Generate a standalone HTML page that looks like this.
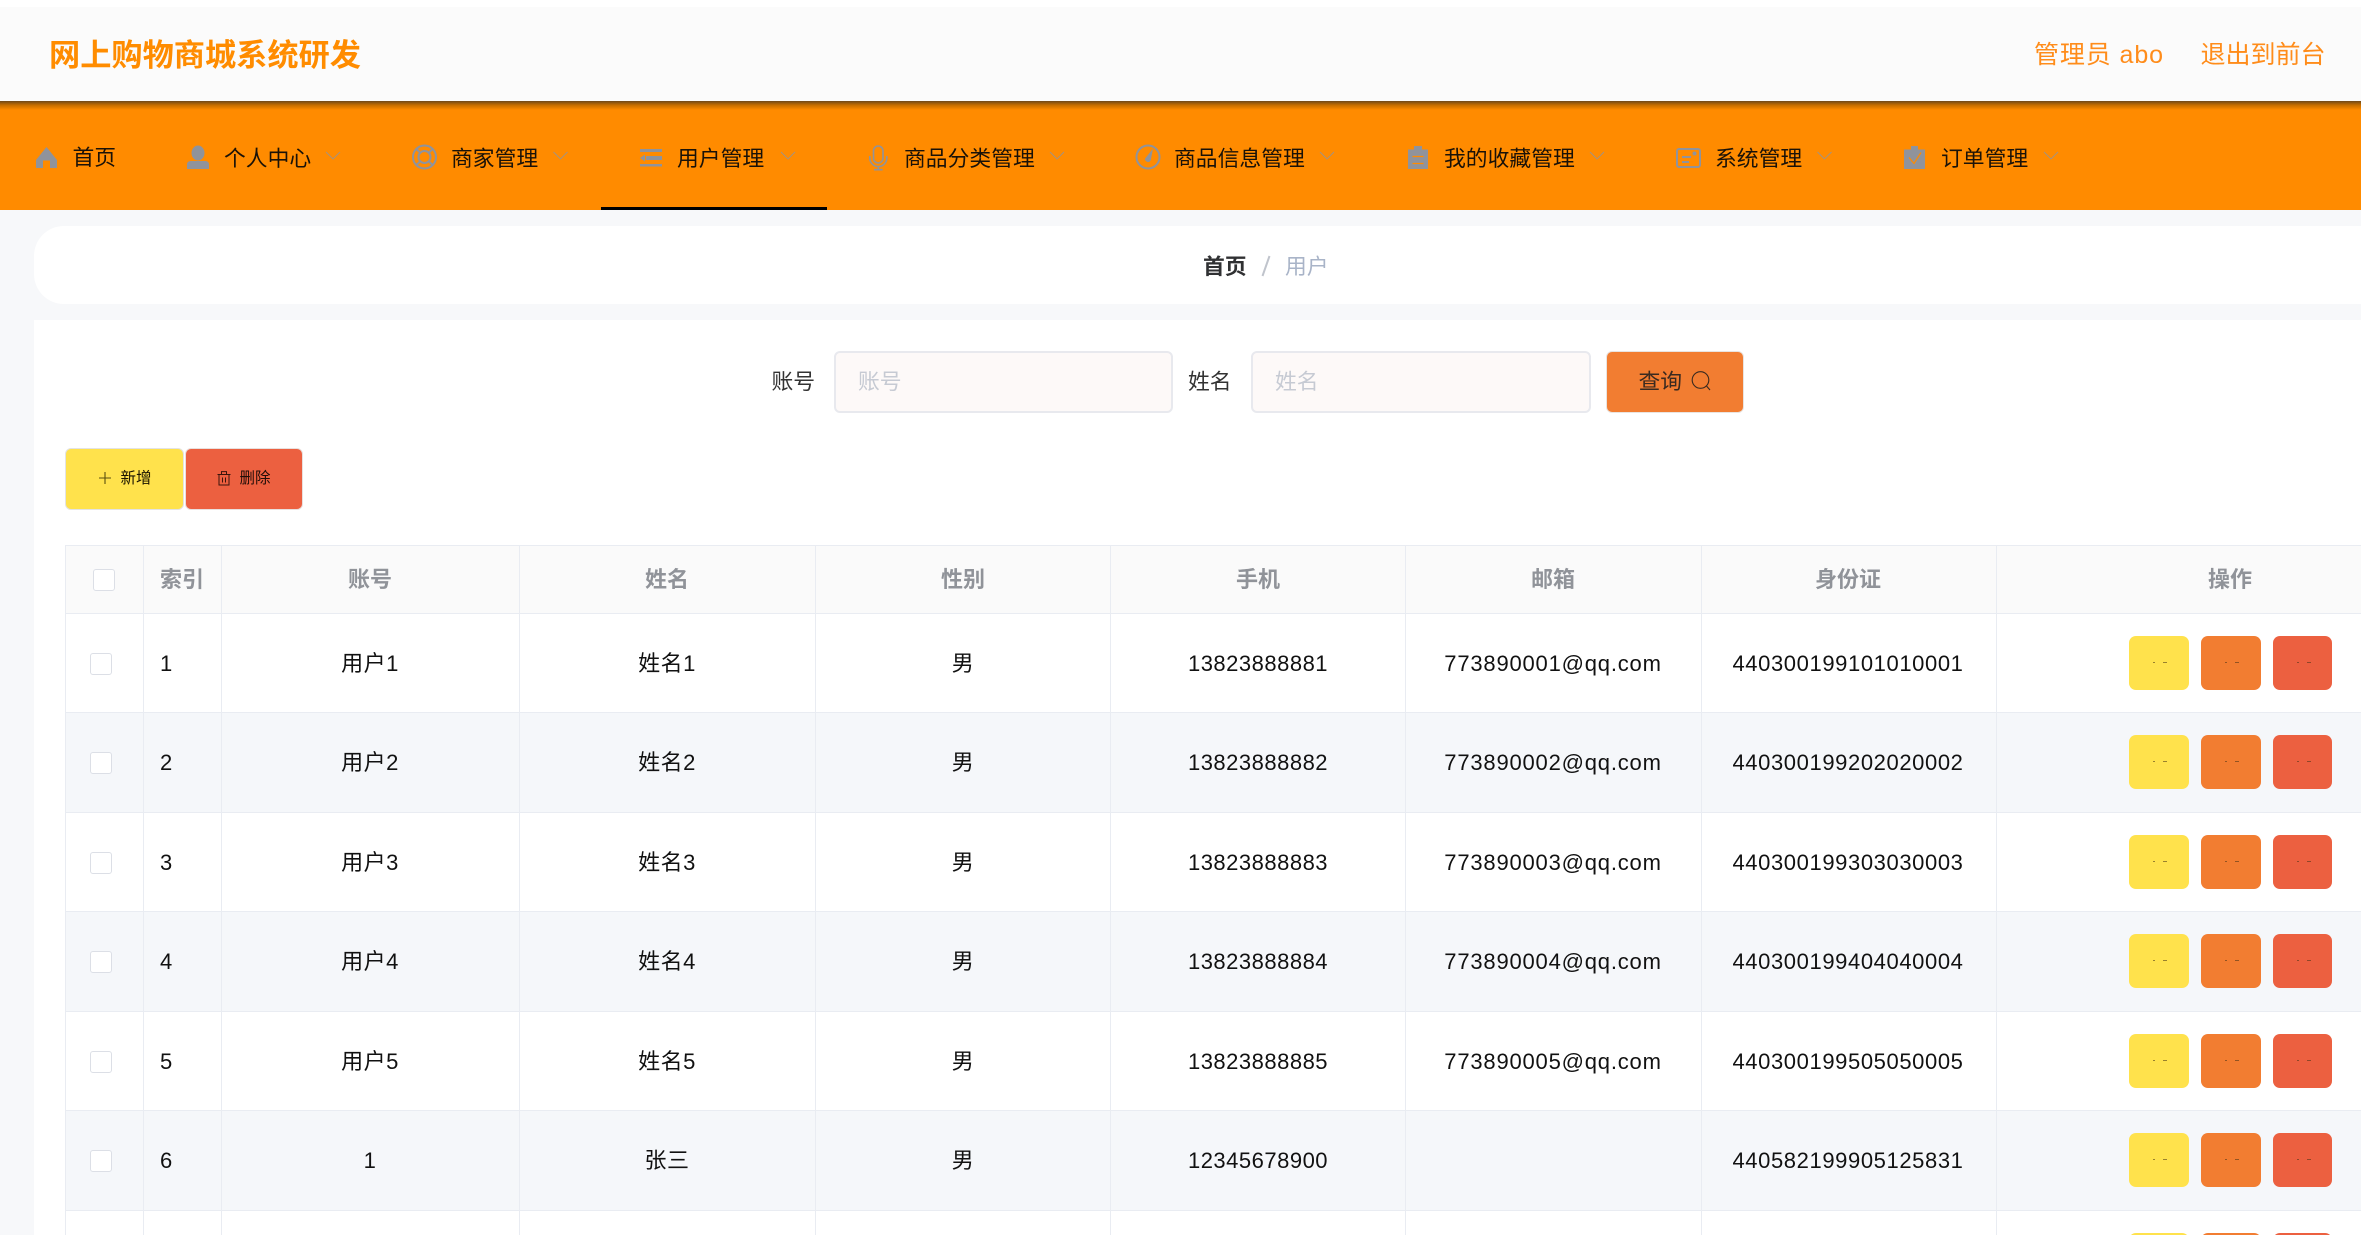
<!DOCTYPE html>
<html lang="zh-CN">
<head>
<meta charset="utf-8">
<title>网上购物商城系统研发</title>
<style>
html,body{margin:0;padding:0;width:2361px;height:1235px;overflow:hidden;background:#f7f8fa;}
body{position:relative;font-family:"Liberation Sans","Noto Sans CJK SC",sans-serif;color:#111;font-size:22px;}
.a{position:absolute;white-space:nowrap;}
.n{position:absolute;top:132.5px;height:52px;line-height:52px;font-size:21.8px;color:#1a1208;white-space:nowrap;}
svg{position:absolute;left:0;top:0;overflow:visible;}
.r{position:absolute;left:65px;width:2296px;height:99.45px;border-top:1px solid #e9ecf2;box-sizing:border-box;}
.even{background:#f5f7fa;}
.odd{background:#fff;}
.c{position:absolute;top:0;line-height:99px;text-align:center;white-space:nowrap;font-size:22px;letter-spacing:.5px;}
.i{left:95px;width:60px;text-align:left;}
.u{left:156px;width:298px;}
.x{left:454px;width:296px;}
.s{left:750px;width:296px;}
.p{left:1045px;width:296px;}
.m{left:1340px;width:296px;letter-spacing:.8px;}
.d{left:1635px;width:296px;letter-spacing:.6px;}
.ck{position:absolute;left:25px;top:39px;width:22px;height:22px;box-sizing:border-box;border:1px solid #dcdfe6;border-radius:3px;background:#fff;}
.b{position:absolute;top:22px;height:54px;border-radius:7px;}
.b1{left:2064px;width:60px;background:#ffe24c;}
.b2{left:2136px;width:60px;background:#f27d31;}
.b3{left:2208px;width:59px;background:#ec6040;}
.b i{position:absolute;top:26px;height:1px;background:rgba(70,50,20,.55);}
.b i:first-child{left:24px;width:2px;}
.b i:last-child{left:34px;width:4px;}
.v{position:absolute;top:545px;height:690px;width:1px;background:#e9ecf2;}
.h{position:absolute;top:0;height:68px;line-height:68px;text-align:center;font-weight:bold;font-size:22px;color:#909399;white-space:nowrap;}
</style>
</head>
<body>
<div class="a" style="left:0;top:0;width:2361px;height:7px;background:#fff"></div>
<div class="a" style="left:0;top:7px;width:2361px;height:94px;background:#fbfbfb"></div>
<div class="a" style="left:49px;top:31px;height:50px;line-height:50px;font-size:31.2px;font-weight:bold;color:#ff8c00">网上购物商城系统研发</div>
<div class="a" style="left:2034px;top:31px;height:48px;line-height:48px;font-size:25px;color:#ff8c1a;letter-spacing:.9px">管理员 abo</div>
<div class="a" style="left:2200.5px;top:31px;height:48px;line-height:48px;font-size:25px;color:#ff8c1a">退出到前台</div>

<div class="a" style="left:0;top:101px;width:2361px;height:109px;background:#ff8b00"></div>
<div class="a" style="left:0;top:101px;width:2361px;height:9px;background:linear-gradient(to bottom,rgba(40,40,40,.68),rgba(60,40,0,.3) 45%,rgba(60,40,0,0))"></div>
<div class="a" style="left:601px;top:207px;width:226px;height:3px;background:#000"></div>

<div class="n" style="left:72.5px;top:131.5px">首页</div>
<div class="n" style="left:224px">个人中心</div>
<div class="n" style="left:451px">商家管理</div>
<div class="n" style="left:677px">用户管理</div>
<div class="n" style="left:904px">商品分类管理</div>
<div class="n" style="left:1174px">商品信息管理</div>
<div class="n" style="left:1444px">我的收藏管理</div>
<div class="n" style="left:1715px">系统管理</div>
<div class="n" style="left:1941px">订单管理</div>

<svg width="2361" height="1235" viewBox="0 0 2361 1235">
<!-- home -->
<path d="M46.5 147 L57 160 V168 H50 V160.5 H43 V168 H36 V160 Z" fill="#90939b"/>
<!-- person -->
<ellipse cx="198" cy="153" rx="6.5" ry="7.5" fill="#90939b"/>
<path d="M187 164.5 Q187 161 191 161 H205 Q209 161 209 164.5 V169 H187 Z" fill="#90939b"/>
<!-- lifebuoy -->
<g fill="none" stroke="#90939b" stroke-width="2">
<circle cx="424.5" cy="157" r="11.5"/>
<circle cx="424.5" cy="157" r="6"/>
<path d="M416.5 149 L420.3 152.8 M432.5 149 L428.7 152.8 M416.5 165 L420.3 161.2 M432.5 165 L428.7 161.2"/>
</g>
<!-- list/outdent -->
<path d="M640 149 H662 V152 H640 Z M646 156 H662 V160 H646 Z M640 164 H662 V166.5 H640 Z M640 158 L645 154.5 V161.5 Z" fill="#90939b"/>
<!-- mic -->
<g fill="none" stroke="#90939b" stroke-width="1.6">
<rect x="873.5" y="146" width="9.5" height="17" rx="4.75"/>
<path d="M869.8 156 V158 A8.5 8.5 0 0 0 886.8 158 V156 M878.3 166.5 V169.5 M874 169.7 H882.6"/>
</g>
<!-- compass -->
<circle cx="1148" cy="157" r="11.5" fill="none" stroke="#90939b" stroke-width="2"/>
<path d="M1153 148.5 L1150.8 160 A3 3 0 0 1 1145 158.8 Z" fill="#90939b"/>
<!-- battery clipboard -->
<path d="M1414 146 H1422 V149.5 H1428 V169 H1408 V149.5 H1414 Z" fill="#90939b"/>
<path d="M1412.5 156.5 H1423.5 M1412.5 163.5 H1423.5" stroke="#ff8b00" stroke-width="1.2"/>
<!-- system -->
<g fill="none" stroke="#90939b" stroke-width="2">
<rect x="1677" y="149" width="23" height="18" rx="2"/>
<path d="M1682 157 H1691 M1682 162 H1689"/>
</g>
<circle cx="1694.5" cy="153.5" r="2" fill="#90939b"/>
<!-- clipboard check -->
<path d="M1911 146 H1918 V149.5 H1925 V169 H1904 V149.5 H1911 Z" fill="#90939b"/>
<path d="M1909 157.5 L1914 163.5 L1921 152.5" fill="none" stroke="#ff8b00" stroke-width="1.2"/>
<!-- chevrons -->
<g fill="none" stroke="#a29384" stroke-width=".9">
<path d="M326 152 L333 159 L340 152"/>
<path d="M553.5 152 L560.5 159 L567.5 152"/>
<path d="M781 152 L788 159 L795 152"/>
<path d="M1050 152 L1057 159 L1064 152"/>
<path d="M1320 152 L1327 159 L1334 152"/>
<path d="M1590 152 L1597 159 L1604 152"/>
<path d="M1817.5 152 L1824.5 159 L1831.5 152"/>
<path d="M2044 152 L2051 159 L2058 152"/>
</g>
</svg>

<!-- breadcrumb -->
<div class="a" style="left:34px;top:226px;width:2327px;height:78px;background:#fff;border-radius:30px 0 0 30px"></div>
<div class="a" style="left:1203px;top:241.5px;height:50px;line-height:50px;font-size:21.8px;font-weight:bold;color:#303133">首页</div>
<svg width="2361" height="1235" viewBox="0 0 2361 1235"><path d="M1269.5 256 L1262.5 276" stroke="#c0c4cc" stroke-width="2" fill="none"/></svg>
<div class="a" style="left:1285px;top:241.5px;height:50px;line-height:50px;font-size:21.8px;color:#a9b4c8">用户</div>

<!-- main panel -->
<div class="a" style="left:34px;top:320px;width:2327px;height:915px;background:#fff"></div>

<!-- search -->
<div class="a" style="left:771.5px;top:358px;height:48px;line-height:48px;font-size:21.8px;color:#333">账号</div>
<div class="a" style="left:834px;top:351px;width:339px;height:62px;box-sizing:border-box;border:2px solid #e8e9ee;border-radius:6px;background:#fdf9f8"></div>
<div class="a" style="left:858px;top:358px;height:48px;line-height:48px;font-size:21.8px;color:#c6cad3">账号</div>
<div class="a" style="left:1188px;top:358px;height:48px;line-height:48px;font-size:21.8px;color:#333">姓名</div>
<div class="a" style="left:1251px;top:351px;width:340px;height:62px;box-sizing:border-box;border:2px solid #e8e9ee;border-radius:6px;background:#fdf9f8"></div>
<div class="a" style="left:1275px;top:358px;height:48px;line-height:48px;font-size:21.8px;color:#c6cad3">姓名</div>
<div class="a" style="left:1606px;top:351px;width:138px;height:62px;box-sizing:border-box;border:1px solid #e9e4e0;border-radius:6px;background:#f27d31"></div>
<div class="a" style="left:1638.5px;top:358px;height:48px;line-height:48px;font-size:21.8px;color:#3a2a20">查询</div>
<svg width="2361" height="1235" viewBox="0 0 2361 1235">
<circle cx="1700.5" cy="380" r="8.3" fill="none" stroke="#3a2a20" stroke-width="1.1"/>
<path d="M1706.5 386 L1710 390" stroke="#3a2a20" stroke-width="1.1"/>
</svg>

<!-- add / delete -->
<div class="a" style="left:65px;top:448px;width:119px;height:62px;box-sizing:border-box;border:1px solid #e3e3e3;border-radius:6px;background:#ffe24c"></div>
<div class="a" style="left:184.5px;top:448px;width:118px;height:62px;box-sizing:border-box;border:1px solid #e9e0de;border-radius:6px;background:#ec6040"></div>
<div class="a" style="left:120.5px;top:459px;height:40px;line-height:40px;font-size:15.5px;color:#1a1400">新增</div>
<div class="a" style="left:239.5px;top:459px;height:40px;line-height:40px;font-size:15.5px;color:#1f0d08">删除</div>
<svg width="2361" height="1235" viewBox="0 0 2361 1235">
<path d="M105 472 V484 M99 478 H111" stroke="#5a4f10" stroke-width="1.1" fill="none"/>
<g fill="none" stroke="#3a150c" stroke-width="1">
<path d="M217.5 474.5 H230.5 M221.5 474.5 V471.6 H226.5 V474.5"/>
<rect x="219" y="474.5" width="10" height="10.5"/>
<path d="M222.5 477.5 V482.5 M225.5 477.5 V482.5"/>
</g>
</svg>

<!-- table -->
<div class="a" style="left:65px;top:545px;width:2296px;height:68px;background:#fafafa;border-top:1px solid #e9ecf2;box-sizing:border-box">
  <div class="ck" style="left:28px;top:23px"></div>
  <div class="h" style="left:95px;width:60px;text-align:left">索引</div>
  <div class="h" style="left:156px;width:298px">账号</div>
  <div class="h" style="left:454px;width:296px">姓名</div>
  <div class="h" style="left:750px;width:296px">性别</div>
  <div class="h" style="left:1045px;width:296px">手机</div>
  <div class="h" style="left:1340px;width:296px">邮箱</div>
  <div class="h" style="left:1635px;width:296px">身份证</div>
  <div class="h" style="left:1932px;width:466px">操作</div>
</div>

<div class="r odd" style="top:613px"><span class="ck"></span><div class="c i">1</div><div class="c u">用户1</div><div class="c x">姓名1</div><div class="c s">男</div><div class="c p">13823888881</div><div class="c m">773890001@qq.com</div><div class="c d">440300199101010001</div><div class="b b1"><i></i><i></i></div><div class="b b2"><i></i><i></i></div><div class="b b3"><i></i><i></i></div></div>
<div class="r even" style="top:712.4px"><span class="ck"></span><div class="c i">2</div><div class="c u">用户2</div><div class="c x">姓名2</div><div class="c s">男</div><div class="c p">13823888882</div><div class="c m">773890002@qq.com</div><div class="c d">440300199202020002</div><div class="b b1"><i></i><i></i></div><div class="b b2"><i></i><i></i></div><div class="b b3"><i></i><i></i></div></div>
<div class="r odd" style="top:811.9px"><span class="ck"></span><div class="c i">3</div><div class="c u">用户3</div><div class="c x">姓名3</div><div class="c s">男</div><div class="c p">13823888883</div><div class="c m">773890003@qq.com</div><div class="c d">440300199303030003</div><div class="b b1"><i></i><i></i></div><div class="b b2"><i></i><i></i></div><div class="b b3"><i></i><i></i></div></div>
<div class="r even" style="top:911.3px"><span class="ck"></span><div class="c i">4</div><div class="c u">用户4</div><div class="c x">姓名4</div><div class="c s">男</div><div class="c p">13823888884</div><div class="c m">773890004@qq.com</div><div class="c d">440300199404040004</div><div class="b b1"><i></i><i></i></div><div class="b b2"><i></i><i></i></div><div class="b b3"><i></i><i></i></div></div>
<div class="r odd" style="top:1010.8px"><span class="ck"></span><div class="c i">5</div><div class="c u">用户5</div><div class="c x">姓名5</div><div class="c s">男</div><div class="c p">13823888885</div><div class="c m">773890005@qq.com</div><div class="c d">440300199505050005</div><div class="b b1"><i></i><i></i></div><div class="b b2"><i></i><i></i></div><div class="b b3"><i></i><i></i></div></div>
<div class="r even" style="top:1110.2px"><span class="ck"></span><div class="c i">6</div><div class="c u">1</div><div class="c x">张三</div><div class="c s">男</div><div class="c p">12345678900</div><div class="c m"></div><div class="c d">440582199905125831</div><div class="b b1"><i></i><i></i></div><div class="b b2"><i></i><i></i></div><div class="b b3"><i></i><i></i></div></div>
<div class="r odd" style="top:1209.7px;height:26px;overflow:hidden"><div class="b b1"></div><div class="b b2"></div><div class="b b3"></div></div>

<div class="v" style="left:65px"></div>
<div class="v" style="left:143px"></div>
<div class="v" style="left:221px"></div>
<div class="v" style="left:519px"></div>
<div class="v" style="left:815px"></div>
<div class="v" style="left:1110px"></div>
<div class="v" style="left:1405px"></div>
<div class="v" style="left:1701px"></div>
<div class="v" style="left:1996px"></div>
</body>
</html>
